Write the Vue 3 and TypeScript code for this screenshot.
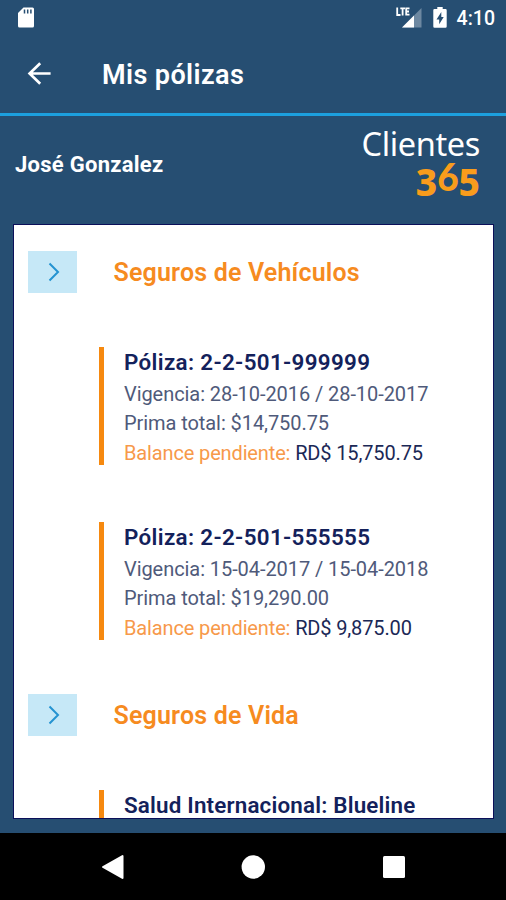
<script setup lang="ts">
interface Policy {
  title: string
  validity?: string
  premium?: string
  balance?: string
}
interface Section {
  name: string
  policies: Policy[]
}

const sections: Section[] = [
  {
    name: 'Seguros de Vehículos',
    policies: [
      { title: 'Póliza: 2-2-501-999999', validity: '28-10-2016 / 28-10-2017', premium: '$14,750.75', balance: 'RD$ 15,750.75' },
      { title: 'Póliza: 2-2-501-555555', validity: '15-04-2017 / 15-04-2018', premium: '$19,290.00', balance: 'RD$ 9,875.00' },
    ],
  },
  {
    name: 'Seguros de Vida',
    policies: [{ title: 'Salud Internacional: Blueline' }],
  },
]
</script>

<template>
  <div class="screen">
    <div class="status">
      <svg class="sd" width="18" height="22" viewBox="0 0 18 22">
        <path d="M6.5 0.5H15.5Q17 0.5 17 2V19Q17 20.5 15.5 20.5H2.5Q1 20.5 1 19V6Z" fill="#fff" />
        <path d="M7.5 2.5V6.5M10.7 2.5V6.5M13.9 2.5V6.5" stroke="#264e72" stroke-width="1.5" />
      </svg>
      <div class="indicators">
        <svg width="27" height="22" viewBox="0 0 27 22">
          <path d="M25.5 1V20.5H6Z" fill="#6d88a1" />
          <path d="M18 8.5V20.5H6Z" fill="#fff" />
          <path d="M1.2 0.5V8H4.5M4.3 1.4H9M6.6 1.4V8.5M13.5 1.4H10.2V7.7H13.5M10.2 4.5H13" fill="none" stroke="#fff" stroke-width="1.8" />
        </svg>
        <svg class="battery" width="14" height="21" viewBox="0 0 14 21">
          <path d="M4.3 0H9.7V2H12.5Q13.7 2 13.7 3.2V19.5Q13.7 20.7 12.5 20.7H1.5Q0.3 20.7 0.3 19.5V3.2Q0.3 2 1.5 2H4.3Z" fill="#fff" />
          <path d="M8.3 5L3.5 12.5H6.2V17.3L10.7 10H8.3Z" fill="#264e72" />
        </svg>
        <span class="clock">4:10</span>
      </div>
    </div>

    <header class="appbar">
      <svg width="24" height="24" viewBox="0 0 24 24">
        <path d="M23.6 11.5H2.6M13.2 1.2L2.6 11.5L13.2 21.8" fill="none" stroke="#fff" stroke-width="2.7" />
      </svg>
      <h1>Mis pólizas</h1>
    </header>

    <div class="client">
      <span class="name">José Gonzalez</span>
      <div class="brand">
        <span class="brand-top">Clientes</span>
        <span class="brand-num"><span>3</span><span class="six">6</span><span>5</span></span>
      </div>
    </div>

    <main class="card">
      <section v-for="section in sections" :key="section.name">
        <div class="heading">
          <button class="toggle">
            <svg width="12" height="20" viewBox="0 0 12 20">
              <path d="M1.5 1.5L10 10L1.5 18.5" fill="none" stroke="#2493d1" stroke-width="2" />
            </svg>
          </button>
          <h2>{{ section.name }}</h2>
        </div>
        <article v-for="policy in section.policies" :key="policy.title" class="policy">
          <h3 :class="{ numbered: policy.validity }">{{ policy.title }}</h3>
          <p v-if="policy.validity" class="validity">Vigencia: {{ policy.validity }}</p>
          <p v-if="policy.premium" class="premium">Prima total: {{ policy.premium }}</p>
          <p v-if="policy.balance" class="balance"><span>Balance pendiente:</span> {{ policy.balance }}</p>
        </article>
      </section>
    </main>

    <nav class="navbar">
      <svg width="24" height="26" viewBox="0 0 24 26">
        <path d="M21.5 2V24L2 13Z" fill="#fff" stroke="#fff" stroke-width="2" stroke-linejoin="round" />
      </svg>
      <svg width="24" height="26" viewBox="0 0 24 26"><circle cx="12.3" cy="13" r="11.7" fill="#fff" /></svg>
      <svg width="24" height="26" viewBox="0 0 24 26"><rect x="1" y="2" width="22" height="22" rx="1.5" fill="#fff" /></svg>
    </nav>
  </div>
</template>

<style>
body {
  margin: 0;
}
</style>

<style scoped>
.screen {
  width: 506px;
  height: 900px;
  display: flex;
  flex-direction: column;
  overflow: hidden;
  background: #264e72;
  font-family: Roboto, "Liberation Sans", sans-serif;
  color: #fff;
}
h1, h2, h3, p {
  margin: 0;
  white-space: nowrap;
}
.status {
  height: 36px;
  flex: none;
  box-sizing: border-box;
  display: flex;
  justify-content: space-between;
  align-items: flex-start;
  padding: 7px 11px 0 17px;
}
.indicators {
  display: flex;
  align-items: flex-start;
}
.battery {
  margin: 0 10px 0 10px;
}
.clock {
  padding-top: 1px;
  font-size: 19.5px;
  line-height: 22px;
  font-weight: 500;
}
.appbar {
  flex: none;
  box-sizing: border-box;
  height: 80px;
  display: flex;
  align-items: center;
  padding-left: 27px;
  padding-bottom: 2px;
  border-bottom: 3px solid #1ca0df;
}
.appbar h1 {
  margin-left: 51px;
  padding-top: 3px;
  font-size: 27px;
  font-weight: 600;
  letter-spacing: 0.4px;
}
.client {
  height: 108px;
  flex: none;
  box-sizing: border-box;
  display: flex;
  justify-content: space-between;
  padding: 0 26px 0 15px;
}
.name {
  padding-top: 36px;
  font-size: 22px;
  line-height: 26px;
  font-weight: 700;
  letter-spacing: 0.27px;
}
.brand {
  display: flex;
  flex-direction: column;
  align-items: flex-end;
  padding-top: 8px;
}
.brand-top {
  font-family: "Noto Sans", sans-serif;
  font-size: 32.5px;
  line-height: 39px;
  letter-spacing: -0.35px;
}
.brand-num {
  display: flex;
  font-family: "Noto Sans", sans-serif;
  font-weight: 800;
  font-size: 37px;
  line-height: 38px;
  color: #f99c1c;
}
.six {
  position: relative;
  top: -5px;
  font-family: Lato, sans-serif;
  font-weight: 900;
}
.card {
  flex: none;
  height: 595px;
  box-sizing: border-box;
  margin: 0 12px 0 13px;
  border: 1px solid #0b1059;
  overflow: hidden;
  background: #fff;
  padding: 26px 0 0 14px;
}
.heading {
  display: flex;
  align-items: center;
  height: 42px;
  margin-bottom: 54px;
}
.toggle {
  width: 49px;
  height: 42px;
  display: flex;
  align-items: center;
  justify-content: center;
  padding: 0 0 0 3px;
  border: 0;
  background: #c6e8f7;
}
.heading h2 {
  margin-left: 36.5px;
  font-size: 25px;
  font-weight: 600;
  letter-spacing: 0.18px;
  color: #f68b1f;
}
.policy {
  height: 118px;
  box-sizing: border-box;
  margin: 0 0 57px 71px;
  padding-left: 20px;
  border-left: 5px solid #f6890f;
  color: #1b2856;
}
.policy:last-child {
  margin-bottom: 54px;
}
.policy h3 {
  padding-bottom: 3px;
  font-size: 22.4px;
  line-height: 30px;
  font-weight: 600;
  letter-spacing: 0.18px;
  color: #13215b;
}
.policy h3.numbered {
  letter-spacing: 0.34px;
}
.policy p {
  font-size: 20px;
  line-height: 29.3px;
  font-weight: 400;
  letter-spacing: -0.07px;
}
.policy .balance {
  letter-spacing: -0.14px;
}
.policy .validity,
.policy .premium {
  color: #4f5a7a;
}
.balance span {
  color: #f7994a;
}
.navbar {
  flex: 1;
  display: flex;
  align-items: center;
  justify-content: center;
  gap: 116.5px;
  margin-top: 14px;
  background: #000;
}
</style>
